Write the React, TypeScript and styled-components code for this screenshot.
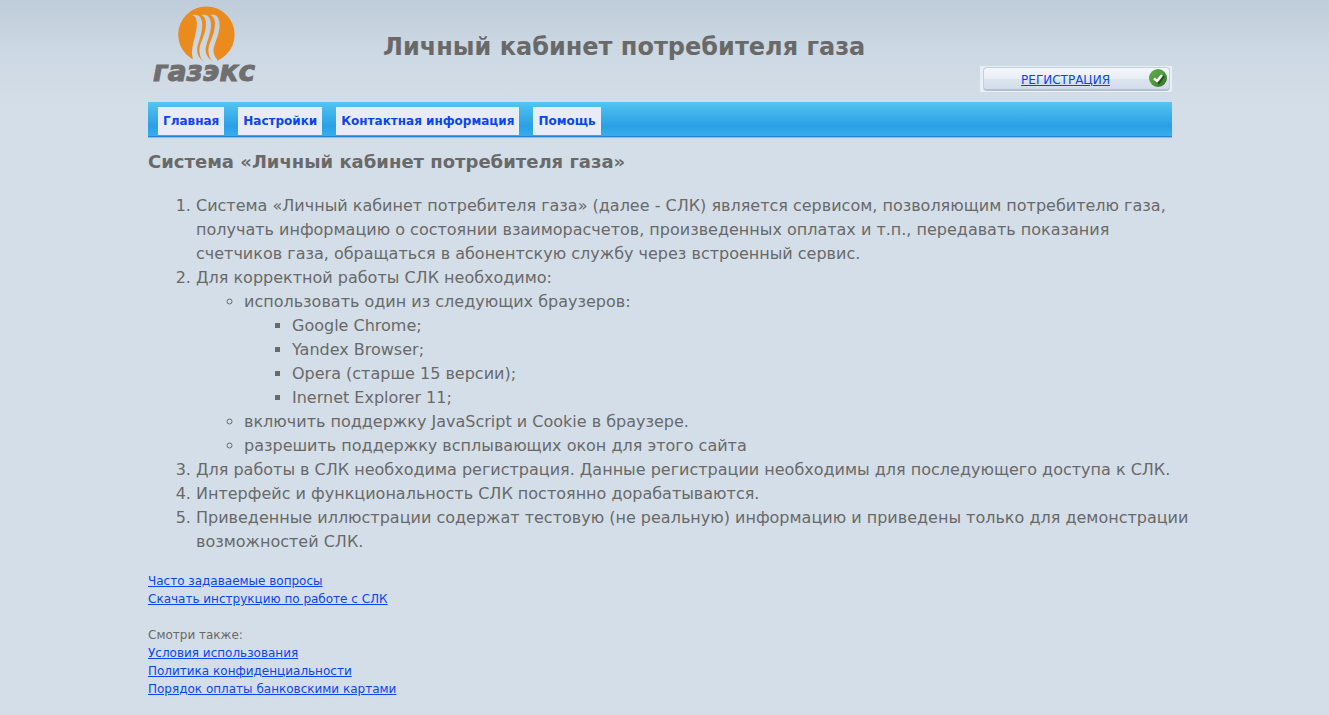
import React from "react";
import styled, { createGlobalStyle } from "styled-components";

const GlobalStyle = createGlobalStyle`
  body {
    margin: 0;
    min-height: 100vh;
    background: #d4dee8 linear-gradient(#bfcdda, #ccd8e3 50px, #d4dee8 110px) no-repeat;
    color: #696969;
    font-family: Verdana, "DejaVu Sans", sans-serif;
    font-size: 12px;
    line-height: 18px;
  }
`;

const Page = styled.div`
  max-width: 1024px;
  margin: 0 auto;
  padding-right: 9px;
  box-sizing: content-box;
`;

const Header = styled.header`
  display: flex;
  height: 102px;
`;

const Logo = styled.a`
  width: 230px;
  padding-left: 5px;
  svg { display: block; }
`;

const Title = styled.h1`
  flex: 1;
  margin: 0;
  padding-top: 29px;
  font-size: 24px;
  line-height: 36px;
  white-space: nowrap;
`;

const Registration = styled.div`
  align-self: flex-end;
  display: flex;
  box-sizing: border-box;
  width: 192px;
  height: 26px;
  margin-bottom: 10px;
  padding: 1px 2px 1px 3px;
  background: #e9eff6;
`;

const RegistrationFace = styled.div`
  flex: 1;
  display: flex;
  align-items: flex-start;
  justify-content: flex-end;
  gap: 38px;
  padding-right: 1px;
  border: 1px solid #c3cedb;
  border-bottom: 2px solid #b3c1d1;
  border-radius: 4px;
  background: linear-gradient(#f3f6fa, #e9eef5 50%, #dbe4ee 55%, #d3ddea);
  line-height: 24px;
`;

const Link = styled.a`
  color: #0a46f0;
`;

const Nav = styled.nav`
  display: flex;
  gap: 14px;
  height: 28px;
  padding: 5px 10px 0;
  border-bottom: 1px solid #3aa9ea;
  background: linear-gradient(#54c6ef, #41b5ec 10px, #2b9fe6 24px, #36abec);
  box-shadow: 0 1px #2583cf, 0 2px #86bfe9;
`;

const Tab = styled.a`
  padding: 0 5px;
  background: #e8edf5;
  color: #0a46f0;
  font-weight: bold;
  line-height: 28px;
  text-decoration: none;
`;

const Heading = styled.h2`
  margin: 14px 0 20px;
  font-size: 18px;
  line-height: 24px;
`;

const List = styled.ol`
  margin: 0 -24px 0 0;
  padding-left: 48px;
  font-size: 16px;
  line-height: 24px;
`;

const SubList = styled.ul`
  margin: 0;
  padding-left: 48px;
`;

const Links = styled.div`
  display: flex;
  flex-direction: column;
  align-items: flex-start;
  margin-top: 18px;
`;

const LogoMark = () => (
  <svg width="112" height="88" viewBox="0 0 112 88" role="img" aria-label="газэкс">
    <mask id="flames">
      <rect width="112" height="88" fill="#fff" />
      <path d="M39.500 15C46 13.500 50 18 49.200 27C48.500 37 43 46 44.300 52C44.800 56 47 59 50.700 61.700V66H41L39.500 57C37.500 50 42 38 43.500 29C44.500 22 44 17 39.500 15Z" />
      <path d="M48.500 15C55 13.500 58.500 18 58 27C57 37 51.500 46 52.800 52C53.300 56 56 59 60 61.700V66H50.700V61.700C48.500 60 47 57 46.500 52C45.500 45 51 38 52.500 29C53.500 22 53 17 48.500 15Z" />
      <path d="M57.500 15C64 13.500 67 18 66.500 27C66 36 60 45 60.500 51C61 55 62 57 64 59V66H60V61.700C57.500 60 56 57 55.500 52C54.500 45 60 38 61.500 29C62.500 22 62 17 57.500 15Z" />
    </mask>
    <circle cx="53.400" cy="34.600" r="28.200" fill="#eb8b1e" mask="url(#flames)" />
    <text
      x="0"
      y="81"
      fill="#706f6f"
      stroke="#706f6f"
      strokeWidth="1"
      fontFamily='"DejaVu Sans", sans-serif'
      fontSize="28"
      fontWeight="bold"
      fontStyle="italic"
    >
      газэкс
    </text>
  </svg>
);

const CheckMark = () => (
  <svg width="20" height="20" viewBox="0 0 20 20" aria-hidden="true">
    <defs>
      <linearGradient id="green" x1="0" y1="0" x2="1" y2="1">
        <stop offset="0" stopColor="#5fae46" />
        <stop offset="0.500" stopColor="#4f9a3c" />
        <stop offset="1" stopColor="#2f6a26" />
      </linearGradient>
    </defs>
    <circle cx="10" cy="10" r="9" fill="url(#green)" />
    <path d="M7 12L11 15L16 8" fill="none" stroke="#24501d" strokeWidth="2" />
    <path d="M6 10.500L9 13L14 7" fill="none" stroke="#fff" strokeWidth="2.500" />
  </svg>
);

const tabs = ["Главная", "Настройки", "Контактная информация", "Помощь"];
const helpLinks = ["Часто задаваемые вопросы", "Скачать инструкцию по работе с СЛК"];
const legalLinks = [
  "Условия использования",
  "Политика конфиденциальности",
  "Порядок оплаты банковскими картами",
];

export default function App() {
  return (
    <>
      <GlobalStyle />
      <Page>
        <Header>
          <Logo href="#"><LogoMark /></Logo>
          <Title>Личный кабинет потребителя газа</Title>
          <Registration>
            <RegistrationFace>
              <Link href="#">РЕГИСТРАЦИЯ</Link>
              <CheckMark />
            </RegistrationFace>
          </Registration>
        </Header>
        <Nav>
          {tabs.map((tab) => <Tab key={tab} href="#">{tab}</Tab>)}
        </Nav>
        <main>
          <Heading>Система «Личный кабинет потребителя газа»</Heading>
          <List>
            <li>
              Система «Личный кабинет потребителя газа» (далее - СЛК) является сервисом,
              позволяющим потребителю газа, получать информацию о состоянии взаиморасчетов,
              произведенных оплатах и т.п., передавать показания счетчиков газа, обращаться в
              абонентскую службу через встроенный сервис.
            </li>
            <li>
              Для корректной работы СЛК необходимо:
              <SubList>
                <li>
                  использовать один из следующих браузеров:
                  <SubList>
                    <li>Google Chrome;</li>
                    <li>Yandex Browser;</li>
                    <li>Opera (старше 15 версии);</li>
                    <li>Inernet Explorer 11;</li>
                  </SubList>
                </li>
                <li>включить поддержку JavaScript и Cookie в браузере.</li>
                <li>разрешить поддержку всплывающих окон для этого сайта</li>
              </SubList>
            </li>
            <li>
              Для работы в СЛК необходима регистрация. Данные регистрации необходимы для
              последующего доступа к СЛК.
            </li>
            <li>Интерфейс и функциональность СЛК постоянно дорабатываются.</li>
            <li>
              Приведенные иллюстрации содержат тестовую (не реальную) информацию и приведены
              только для демонстрации возможностей СЛК.
            </li>
          </List>
          <Links>
            {helpLinks.map((text) => <Link key={text} href="#">{text}</Link>)}
          </Links>
          <Links>
            <span>Смотри также:</span>
            {legalLinks.map((text) => <Link key={text} href="#">{text}</Link>)}
          </Links>
        </main>
      </Page>
    </>
  );
}
